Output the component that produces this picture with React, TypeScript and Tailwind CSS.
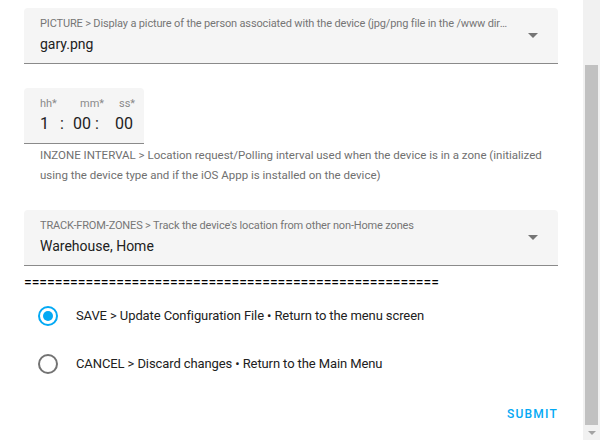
import React from "react";

function Arrow() {
  return (
    <svg width="10" height="5" viewBox="0 0 10 5" className="shrink-0">
      <path d="M0 0 L10 0 L5 5 Z" fill="#757575" />
    </svg>
  );
}

function SelectField({ label, value }: { label: string; value: string }) {
  return (
    <div className="flex h-[56px] min-w-0 items-center rounded-t-[4px] border-b border-[#8a8a8a] bg-[#f5f5f5] pl-4 pr-5">
      <div className="flex min-w-0 flex-1 flex-col">
        <div className="truncate text-[11px] leading-[14px] tracking-[-0.15px] text-[#767676]">{label}</div>
        <div className="mt-[3px] text-[14px] leading-[20px] text-[#212121]">{value}</div>
      </div>
      <div className="ml-[17px]">
        <Arrow />
      </div>
    </div>
  );
}

function Radio({ checked, label }: { checked: boolean; label: string }) {
  return (
    <div className="flex h-[48px] items-center">
      <div className="flex w-[48px] items-center justify-center">
        {checked ? (
          <div className="flex h-[20px] w-[20px] items-center justify-center rounded-full border-2 border-[#03a9f4]">
            <div className="h-[10px] w-[10px] rounded-full bg-[#03a9f4]" />
          </div>
        ) : (
          <div className="h-[20px] w-[20px] rounded-full border-2 border-[#737373]" />
        )}
      </div>
      <div className="ml-[4px] text-[13px] tracking-[-0.1px] text-[#212121]">{label}</div>
    </div>
  );
}

export default function App() {
  return (
    <div
      className="flex h-[440px] w-[600px] overflow-hidden bg-white"
      style={{ fontFamily: "Roboto, 'Liberation Sans', sans-serif" }}
    >
      <div className="flex min-w-0 flex-1 flex-col pl-[24px] pr-[25px]">
        <div className="mt-[8px]">
          <SelectField
            label="PICTURE > Display a picture of the person associated with the device (jpg/png file in the /www directory)"
            value="gary.png"
          />
        </div>
        <div className="mt-[24px] flex h-[56px] w-[120px] flex-col rounded-t-[4px] border-b border-[#8a8a8a] bg-[#f5f5f5] pl-4">
          <div className="mt-[9px] flex text-[11px] leading-[14px] text-[#8a8a8a]">
            <span className="w-[40px]">hh*</span>
            <span className="w-[39px]">mm*</span>
            <span>ss*</span>
          </div>
          <div className="mt-[3px] flex text-[16px] leading-[20px] text-[#212121]">
            <span className="w-[20px]">1</span>
            <span className="w-[13px]">:</span>
            <span className="w-[22px]">00</span>
            <span className="w-[20px]">:</span>
            <span>00</span>
          </div>
        </div>
        <div className="mt-[1px] pl-4 text-[11.5px] leading-[20px] text-[#707070]">
          INZONE INTERVAL &gt; Location request/Polling interval used when the device is in a zone (initialized
          <br />
          using the device type and if the iOS Appp is installed on the device)
        </div>
        <div className="mt-[25px]">
          <SelectField
            label="TRACK-FROM-ZONES > Track the device's location from other non-Home zones"
            value="Warehouse, Home"
          />
        </div>
        <div className="mt-[6px] overflow-hidden whitespace-nowrap text-[14px] leading-[20px] text-black">
          ======================================================
        </div>
        <div className="flex flex-col">
          <Radio checked label="SAVE > Update Configuration File • Return to the menu screen" />
          <Radio checked={false} label="CANCEL > Discard changes • Return to the Main Menu" />
        </div>
        <div className="mt-[18px] flex justify-end">
          <div className="text-[12px] font-medium leading-[16px] tracking-[1.2px] text-[#03a9f4]">SUBMIT</div>
        </div>
      </div>
      <div className="flex h-full w-[17px] shrink-0 flex-col bg-[#f1f1f1]">
        <div className="h-[65px]" />
        <div className="mx-[2px] h-[360px] bg-[#c1c1c1]" />
        <div className="flex flex-1 items-center justify-center">
          <svg width="8" height="4" viewBox="0 0 8 4">
            <path d="M0 0 L8 0 L4 4 Z" fill="#a3a3a3" />
          </svg>
        </div>
      </div>
    </div>
  );
}
